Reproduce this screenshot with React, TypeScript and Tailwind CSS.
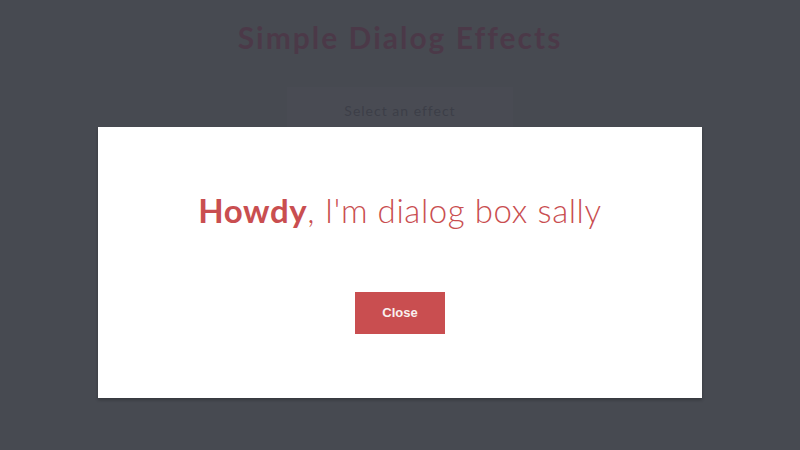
import { useState } from "react";

export default function App() {
  const [open, setOpen] = useState(true);

  return (
    <div className="relative h-[450px] w-[800px] overflow-hidden bg-[#a1a59b] font-['Lato',sans-serif]">
      {/* Page behind the dialog */}
      <header className="flex flex-col items-center pt-[18px]">
        <h1 className="text-[30px] font-bold leading-[38px] tracking-[2px] text-[#bc3a5f]">Simple Dialog Effects</h1>
        <div className="mt-[31px] flex h-[56px] w-[226px] justify-center bg-[#abaea8] pt-[13px] text-[14px] tracking-[1px] text-[#5a5a5a]">
          Select an effect
        </div>
      </header>

      {/* Overlay */}
      {open && (
        <div className="absolute inset-0 flex justify-center bg-[#373a44]/85 pt-[127px]">
          <div className="flex h-[271px] w-[604px] flex-col items-center bg-white pt-[63px] shadow-[0_2px_3px_rgba(0,0,0,0.25)]">
            <h2 className="text-[33px] font-light leading-[40px] tracking-[0.6px] text-[#c94e50]">
              <strong className="font-bold">Howdy</strong>, I'm dialog box sally
            </h2>
            <button
              onClick={() => setOpen(false)}
              className="mt-[62px] h-[42px] w-[90px] bg-[#c94e50] font-['Liberation_Sans',sans-serif] text-[13px] font-bold text-[#f9f0ee]"
            >
              Close
            </button>
          </div>
        </div>
      )}
    </div>
  );
}
